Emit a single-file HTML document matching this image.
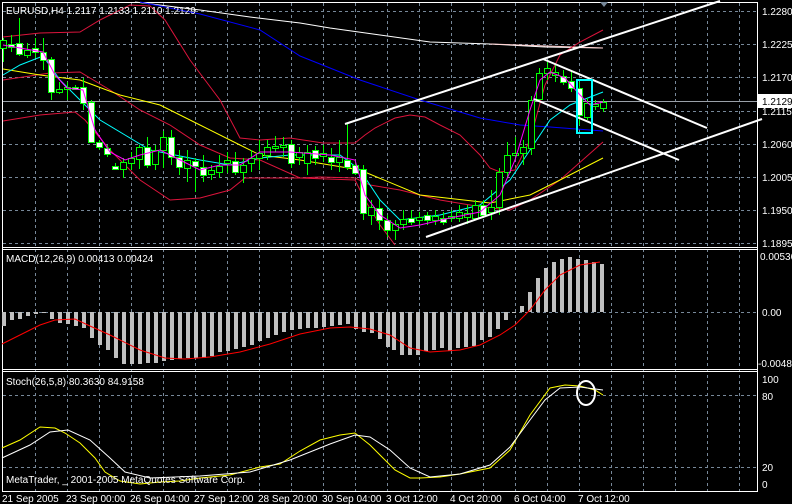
<!DOCTYPE html>
<html><head><meta charset="utf-8"><style>
html,body{margin:0;padding:0;background:#000;width:792px;height:504px;overflow:hidden}
svg{display:block}
text{font-family:"Liberation Sans",sans-serif;font-size:10px;fill:#fff}
</style></head><body>
<svg width="792" height="504" viewBox="0 0 792 504" xmlns="http://www.w3.org/2000/svg">
<rect width="792" height="504" fill="#000"/>
<g stroke="#778899" stroke-dasharray="3 3" stroke-width="1">
<path d="M35.5 3V491M67.5 3V491M99.5 3V491M131.5 3V491M163.5 3V491M195.5 3V491M227.5 3V491M259.5 3V491M291.5 3V491M323.5 3V491M355.5 3V491M387.5 3V491M419.5 3V491M451.5 3V491M483.5 3V491M515.5 3V491M547.5 3V491M579.5 3V491M611.5 3V491M643.5 3V491M675.5 3V491M707.5 3V491M739.5 3V491"/>
<path d="M3 11.5H757M3 44.5H757M3 77.5H757M3 111.5H757M3 144.5H757M3 177.5H757M3 210.5H757M3 243.5H757M3 312.5H757M3 395.5H757M3 467.5H757"/>
</g>
<path d="M3 101.5H757" stroke="#9aa0a8" stroke-width="1"/>
<g stroke="#fff" fill="none" stroke-width="1">
<path d="M2.5 2.5H757.5V491.5H2.5Z"/>
<path d="M2.5 247.5H757.5M2.5 249.5H757.5M2.5 369.5H757.5M2.5 371.5H757.5"/>
</g>
<g fill="none" stroke-width="1">
<polyline stroke="#fff" points="135,2 200,10 250,17 300,23 330,28 380,35 430,42 490,44 545,47 603,48"/>
<polyline stroke="#ffd0d0" points="490,44 603,48"/>
<polyline stroke="#00f" points="140,2 200,14 260,30 300,56 360,80 420,100 480,118 520,125 550,127 603,131"/>
<polyline stroke="#dc143c" points="3,37 40,33 80,32 100,20 130,5 150,6 165,20 190,60 220,100 240,138 260,140 290,138 323,143 355,143 365,135 375,128 395,118 410,115 425,117 440,125 460,135 480,155 490,168 500,172 515,170 530,140 545,85 560,55 580,42 603,30"/>
<polyline stroke="#dc143c" points="3,80 50,73 80,72 110,90 140,110 170,125 200,145 230,158 260,160 300,178 320,177 355,178 370,185 400,190 440,200 470,205 490,208 510,210 530,200 560,180 603,142"/>
<polyline stroke="#dc143c" points="3,121 40,115 75,112 85,120 110,150 140,180 170,200 200,198 230,190 245,178 270,178 300,178 355,180 365,200 380,225 395,245"/>
<polyline stroke="#ff0" points="3,69 40,75 80,80 120,95 160,105 200,125 240,145 260,155 300,160 360,170 420,195 490,203 530,195 560,180 603,158"/>
<polyline stroke="#0ff" points="3,75 20,65 43,56 60,80 80,100 100,120 125,135 150,150 175,155 200,160 230,165 260,158 290,155 340,155 360,170 380,200 400,220 440,215 480,205 510,180 530,150 550,120 570,105 603,92"/>
</g>
<path stroke="#0f0" stroke-width="1" fill="none" d="M3.5 38V62M11.5 35V52M19.5 18V56M27.5 43V58M35.5 38V58M43.5 38V70M51.5 57V100M59.5 82V94M67.5 82V100M75.5 85V90M83.5 78V110M91.5 100V143M99.5 140V150M107.5 145V157M115.5 163V170M123.5 158V178M131.5 152V170M139.5 145V169M147.5 137V168M155.5 145V170M163.5 131V168M171.5 130V165M179.5 150V175M187.5 150V182M195.5 158V192M203.5 155V182M211.5 165V180M219.5 155V178M227.5 152V173M235.5 152V175M243.5 158V183M251.5 150V172M259.5 140V170M267.5 140V160M275.5 136V152M283.5 137V157M291.5 140V168M299.5 147V165M307.5 145V175M315.5 146V165M323.5 145V162M331.5 148V170M339.5 140V172M347.5 124V170M355.5 160V175M363.5 165V220M371.5 200V225M379.5 200V230M387.5 215V237M395.5 220V240M403.5 210V230M411.5 210V225M419.5 212V226M427.5 212V225M435.5 210V225M443.5 212V225M451.5 210V222M459.5 205V222M467.5 205V224M475.5 200V220M483.5 200V218M491.5 190V220M499.5 168V215M507.5 142V178M515.5 137V160M523.5 140V165M531.5 96V155M539.5 68V102M547.5 62V80M555.5 65V82M563.5 70V85M571.5 70V92M579.5 82V125M587.5 98V120M595.5 100V110M603.5 99V112"/>
<g fill="#000" stroke="#0f0" stroke-width="1">
<rect x="0.5" y="40.5" width="6" height="8"/><rect x="24.5" y="50.5" width="6" height="5"/><rect x="56.5" y="89.5" width="6" height="3"/><rect x="64.5" y="87.5" width="6" height="2"/>
<rect x="120.5" y="162.5" width="6" height="7"/><rect x="128.5" y="158.5" width="6" height="5"/><rect x="136.5" y="147.5" width="6" height="12"/><rect x="152.5" y="150.5" width="6" height="14"/><rect x="160.5" y="137.5" width="6" height="13"/>
<rect x="184.5" y="160.5" width="6" height="8"/><rect x="208.5" y="170.5" width="6" height="4"/><rect x="216.5" y="166.5" width="6" height="6"/><rect x="224.5" y="160.5" width="6" height="3"/><rect x="240.5" y="165.5" width="6" height="7"/><rect x="248.5" y="158.5" width="6" height="5"/><rect x="256.5" y="153.5" width="6" height="5"/><rect x="264.5" y="147.5" width="6" height="8"/><rect x="272.5" y="146.5" width="6" height="2"/><rect x="280.5" y="145.5" width="6" height="2"/>
<rect x="296.5" y="152.5" width="6" height="5"/><rect x="304.5" y="152.5" width="6" height="11"/><rect x="320.5" y="153.5" width="6" height="3"/><rect x="336.5" y="157.5" width="6" height="5"/>
<rect x="368.5" y="207.5" width="6" height="8"/><rect x="392.5" y="224.5" width="6" height="6"/><rect x="400.5" y="219.5" width="6" height="5"/><rect x="416.5" y="217.5" width="6" height="3"/><rect x="432.5" y="216.5" width="6" height="4"/><rect x="448.5" y="216.5" width="6" height="2"/><rect x="456.5" y="212.5" width="6" height="6"/><rect x="464.5" y="213.5" width="6" height="4"/><rect x="472.5" y="205.5" width="6" height="13"/><rect x="488.5" y="207.5" width="6" height="5"/>
<rect x="496.5" y="172.5" width="6" height="35"/><rect x="504.5" y="155.5" width="6" height="17"/><rect x="512.5" y="153.5" width="6" height="2"/><rect x="520.5" y="147.5" width="6" height="6"/><rect x="528.5" y="100.5" width="6" height="48"/><rect x="536.5" y="73.5" width="6" height="26"/><rect x="544.5" y="68.5" width="6" height="5"/><rect x="552.5" y="72.5" width="6" height="3"/>
<rect x="584.5" y="103.5" width="6" height="14"/><rect x="592.5" y="104.5" width="6" height="2"/><rect x="600.5" y="102.5" width="6" height="6"/>
</g>
<g fill="#fff" stroke="#0f0" stroke-width="1">
<rect x="8.5" y="44.5" width="6" height="3"/><rect x="16.5" y="43.5" width="6" height="11"/><rect x="32.5" y="48.5" width="6" height="4"/><rect x="40.5" y="52.5" width="6" height="8"/><rect x="48.5" y="59.5" width="6" height="33"/><rect x="72.5" y="87.5" width="6" height="2"/><rect x="80.5" y="87.5" width="6" height="16"/><rect x="88.5" y="102.5" width="6" height="40"/><rect x="96.5" y="142.5" width="6" height="5"/><rect x="104.5" y="148.5" width="6" height="6"/><rect x="112.5" y="166.5" width="6" height="3"/>
<rect x="144.5" y="147.5" width="6" height="18"/><rect x="168.5" y="137.5" width="6" height="20"/><rect x="176.5" y="157.5" width="6" height="10"/><rect x="192.5" y="161.5" width="6" height="5"/><rect x="200.5" y="167.5" width="6" height="8"/><rect x="232.5" y="161.5" width="6" height="11"/><rect x="288.5" y="144.5" width="6" height="19"/>
<rect x="312.5" y="150.5" width="6" height="8"/><rect x="328.5" y="157.5" width="6" height="5"/><rect x="344.5" y="160.5" width="6" height="7"/><rect x="352.5" y="165.5" width="6" height="8"/><rect x="360.5" y="169.5" width="6" height="44"/><rect x="376.5" y="208.5" width="6" height="12"/><rect x="384.5" y="220.5" width="6" height="10"/><rect x="408.5" y="218.5" width="6" height="4"/><rect x="424.5" y="215.5" width="6" height="5"/><rect x="440.5" y="218.5" width="6" height="4"/><rect x="480.5" y="205.5" width="6" height="10"/>
<rect x="560.5" y="76.5" width="6" height="6"/><rect x="568.5" y="81.5" width="6" height="7"/><rect x="576.5" y="88.5" width="6" height="27"/>
</g>
<polyline fill="none" stroke="#f0f" stroke-width="1" points="3,45 20,48 43,52 55,75 67,88 83,90 95,130 110,152 125,160 140,155 160,150 180,160 200,170 220,165 240,165 260,152 290,152 330,155 355,160 365,195 380,215 400,228 420,225 450,218 480,212 500,195 515,160 530,110 540,80 550,72 565,78 580,95 590,105 603,102"/>
<g stroke="#fff" stroke-width="2" fill="none">
<path d="M345 124L720 1"/>
<path d="M543 59L707 128"/>
<path d="M534 99L679 160"/>
<path d="M426 237L762 119"/>
</g>
<rect x="577" y="80" width="15" height="53" fill="none" stroke="#0ff" stroke-width="2"/>
<path d="M600 2L608 2L604 7Z" fill="#778899"/>
<path stroke="#c0c0c0" stroke-width="4" fill="none" d="M4 312V326M12 312V320M20 312V319M28 312V316M36 312V314M44 312V313M52 312V319M60 312V323M68 312V324M76 312V326M84 312V328M92 312V338M100 312V345M108 312V350M116 312V358M124 312V364M132 312V364M140 312V364M148 312V363M156 312V363M164 312V361M172 312V360M180 312V359M188 312V358M196 312V358M204 312V358M212 312V356M220 312V352M228 312V351M236 312V349M244 312V347M252 312V345M260 312V341M268 312V338M276 312V335M284 312V332M292 312V330M300 312V329M308 312V328M316 312V328M324 312V327M332 312V326M340 312V325M348 312V324M356 312V329M364 312V332M372 312V333M380 312V339M388 312V347M394 312V350M402 312V355M410 312V355M418 312V355M426 312V351M434 312V350M442 312V348M450 312V351M458 312V348M466 312V347M474 312V346M482 312V340M490 312V337M498 312V329M506 312V320M514 312V313M522 312V306M530 312V292M538 312V278M546 312V268M554 312V262M562 312V259M570 312V257M578 312V259M586 312V260M594 312V262M602 312V264"/>
<polyline fill="none" stroke="#f00" stroke-width="1" points="2,344 20,335 40,325 55,320 75,319 90,326 110,335 140,350 165,358 185,359 210,357 240,352 270,344 300,334 330,328 350,327 370,329 390,335 410,348 430,352 460,350 480,345 500,335 515,325 530,310 545,290 560,275 580,265 600,262"/>
<polyline fill="none" stroke="#ff0" stroke-width="1" points="2,448 20,440 40,427 55,428 65,433 80,443 95,458 105,472 120,481 140,484 160,482 180,481 200,478 230,475 260,467 280,464 300,451 320,440 340,435 355,433 370,445 385,460 395,470 410,478 420,478 440,477 460,474 490,468 510,450 530,415 550,388 565,385 580,386 595,390 603,395"/>
<polyline fill="none" stroke="#fff" stroke-width="1" points="2,458 30,445 50,432 68,430 90,440 110,458 125,472 150,478 200,476 250,472 290,460 330,444 355,435 370,437 390,450 410,468 430,477 460,474 490,465 510,447 530,420 545,400 560,388 580,387 603,390"/>
<ellipse cx="586" cy="393" rx="9" ry="12" fill="none" stroke="#fff" stroke-width="2"/>
<text x="6" y="14">EURUSD,H4  1.2117 1.2133 1.2110 1.2129</text>
<text x="6" y="262">MACD(12,26,9) 0.00413 0.00424</text>
<text x="6" y="385">Stoch(26,5,8) 80.3630 84.9158</text>
<text x="6" y="483">MetaTrader, _ 2001-2005 MetaQuotes Software Corp.</text>
<g>
<text x="762" y="15">1.2280</text><text x="762" y="48">1.2225</text><text x="762" y="81">1.2170</text><text x="762" y="115">1.2115</text><text x="762" y="148">1.2060</text><text x="762" y="181">1.2005</text><text x="762" y="214">1.1950</text><text x="762" y="247">1.1895</text>
<text x="760" y="260">0.00536</text><text x="762" y="316">0.00</text><text x="758" y="367">-0.0048</text>
<text x="762" y="383">100</text><text x="762" y="400">80</text><text x="762" y="471">20</text><text x="762" y="488">0</text>
</g>
<rect x="758" y="94" width="34" height="14" fill="#fff"/>
<text x="762" y="105" style="fill:#000">1.2129</text>
<g>
<text x="2" y="502">21 Sep 2005</text><text x="66" y="502">23 Sep 00:00</text><text x="130" y="502">26 Sep 04:00</text><text x="194" y="502">27 Sep 12:00</text><text x="258" y="502">28 Sep 20:00</text><text x="322" y="502">30 Sep 04:00</text><text x="386" y="502">3 Oct 12:00</text><text x="450" y="502">4 Oct 20:00</text><text x="514" y="502">6 Oct 04:00</text><text x="578" y="502">7 Oct 12:00</text>
</g>
</svg>
</body></html>
